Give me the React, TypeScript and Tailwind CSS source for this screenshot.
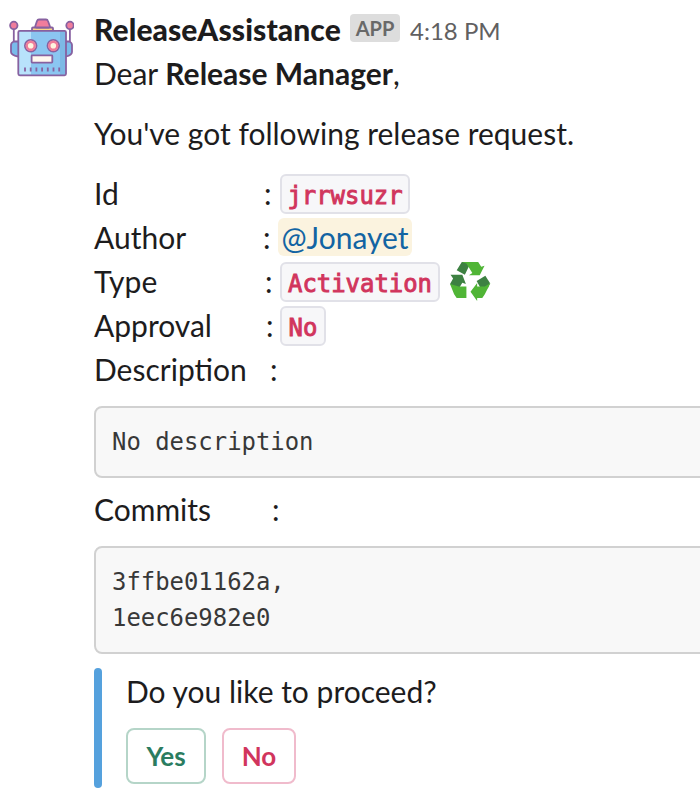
import React from "react";

function Robot() {
  return (
    <svg className="block h-[60px] w-[66px]" viewBox="0 0 66 60" fill="none" stroke="#8761a0" strokeWidth="1.8" strokeLinejoin="round">
      <path d="M5.800 11v14M61.900 11v14" />
      <path d="M10 23.500H6q-3 1-3 3.500v7q0 3 7 4.500M58 23.500h3q3 1 3 3.500v7q0 3-6 4.500" fill="#79bbea" />
      <path d="M25 9.500h19q1 0 1 1v3h-21v-3q0-1 1-1z" fill="#fcd986" />
      <path d="M27.300 8l1.700-5q.5-1.500 2-1.500h7q1.500 0 2 1.500L41.800 8q.5 1.500-1 1.500h-12Q26.800 9.500 27.300 8z" fill="#f07d9c" />
      <rect x="10.300" y="12.800" width="47.700" height="44.500" rx="1.500" fill="#8bc6f1" stroke="none" />
      <path d="M10.500 13.500h12.500v43H10.500z" fill="#b8e2fb" stroke="none" />
      <path d="M52 13h6v44h-6z" fill="#7db9e5" stroke="none" />
      <rect x="10.300" y="12.800" width="47.700" height="44.500" rx="1.500" />
      <circle cx="5.800" cy="7.400" r="3.700" fill="#f07d9c" />
      <circle cx="62" cy="7.400" r="3.700" fill="#f07d9c" />
      <circle cx="22.700" cy="27.700" r="5.800" fill="#fff4df" />
      <circle cx="22.700" cy="27.700" r="4" stroke="#ef7c9a" strokeWidth="2.400" />
      <circle cx="45.300" cy="27.700" r="5.800" fill="#fff4df" />
      <circle cx="45.300" cy="27.700" r="4" stroke="#ef7c9a" strokeWidth="2.400" />
      <rect x="23.600" y="37.400" width="20.700" height="7.200" rx=".5" fill="#fff8f0" />
      <path d="M17 49.500v4M22.700 49.500v4M28.400 49.500v4M34.100 49.500v4M39.800 49.500v4M45.500 49.500v4M51.200 49.500v4" strokeWidth="1.800" />
    </svg>
  );
}

function Recycle() {
  return (
    <svg className="ml-[9px] block h-[41px] w-[43px]" viewBox="0 0 42 40">
      <path d="M7.500 9L12.500 1h9l-2.500 5-3.500 7.500z" fill="#3d8142" />
      <path d="M12.500 1H28.500l3 4.500 3.200-1-4.700 9.300H19.500l3.300-2L17 2.500z" fill="#50b536" />
      <path d="M1.500 13.500h11.500l3.500 9-3.500-1.200L9.500 27l-5-.5L1 22.500l3-5.500z" fill="#3d8142" />
      <path d="M1 22.500l8.500 2.500h7.500v11H7.500L5 32.500z" fill="#50b536" />
      <path d="M27 19.500l8.500-5 4.500 7-2 5H31z" fill="#3d8142" />
      <path d="M40.500 21.500l-5.500 11-2.500 3.500h-5v3L21 30l6.500-8.500V25h7.500z" fill="#50b536" />
    </svg>
  );
}

function Code({ width, children }: { width: string; children: string }) {
  return (
    <code className={`${width} mt-0.5 flex h-10 items-center justify-center rounded-md border-2 border-[#e1e1e8] bg-[#f7f7f9] pt-[3px] font-['DejaVu_Sans_Mono',monospace] text-[23.920px] leading-9 text-[#d1355d] [-webkit-text-stroke:0.900px_#d1355d]`}>
      {children}
    </code>
  );
}

function Field({ label, width, children }: { label: string; width: string; children?: React.ReactNode }) {
  return (
    <div className="flex h-11 items-center">
      <div className="flex w-[186px] shrink-0">
        <span className={`${width} shrink-0`}>{label}</span>
        <span>:</span>
      </div>
      {children}
    </div>
  );
}

export default function App() {
  return (
    <main className="flex h-[806px] w-[700px] overflow-hidden bg-white pt-[7px] font-[Lato,sans-serif] text-[30px] leading-[44px] text-[#1d1c1d]">
      <div className="w-[94px] shrink-0 pl-2 pt-[11px]"><Robot /></div>
      <div className="w-[640px] shrink-0">
        <header className="flex h-11 items-start whitespace-nowrap">
          <span className="w-[247px] font-black tracking-[0.080px]">ReleaseAssistance</span>
          <span className="ml-[9px] mt-[7px] flex h-7 w-[50px] items-center justify-center rounded bg-[#dddddd] text-[20px] font-bold text-[#696969]">APP</span>
          <time className="ml-[10px] mt-0.5 text-[24px] text-[#616061]">4:18 PM</time>
        </header>
        <p>Dear <strong className="font-bold">Release Manager</strong>,</p>
        <p className="mt-4">You've got following release request.</p>
        <section className="mt-4">
          <Field label="Id" width="w-[170px]"><Code width="w-[130px]">jrrwsuzr</Code></Field>
          <Field label="Author" width="w-[169px]">
            <a className="-ml-0.5 flex h-[38px] w-[134px] items-center justify-center rounded-md bg-[#fbf3df] pb-px text-[#1264a3]">@Jonayet</a>
          </Field>
          <Field label="Type" width="w-[171px]"><Code width="w-[160px]">Activation</Code><Recycle /></Field>
          <Field label="Approval" width="w-[172px]"><Code width="w-[46px]">No</Code></Field>
          <Field label="Description" width="w-[176px]" />
        </section>
        <pre className="mt-[15px] h-[72px] rounded-lg border-2 border-[#d1d1d1] bg-[#f8f8f8] px-4 py-4 font-['DejaVu_Sans_Mono',monospace] text-[23.920px] leading-9 text-[#383838]">No description</pre>
        <div className="mt-[9px]"><Field label="Commits" width="w-[178px]" /></div>
        <pre className="mt-[15px] h-[108px] rounded-lg border-2 border-[#d1d1d1] bg-[#f8f8f8] px-4 py-4 font-['DejaVu_Sans_Mono',monospace] text-[23.920px] leading-9 text-[#383838]">{"3ffbe01162a,\n1eec6e982e0"}</pre>
        <section className="mt-[14px] flex h-[120px]">
          <div className="w-2 shrink-0 rounded bg-[#55a1dd]" />
          <div className="pl-6 pt-px">
            <p>Do you like to proceed?</p>
            <div className="mt-[15px] flex gap-4 text-[26px] font-bold">
              <button className="h-14 w-20 rounded-lg border-2 border-[#b5d5c8] text-[#2b7c60]">Yes</button>
              <button className="h-14 w-[74px] rounded-lg border-2 border-[#f0bbcc] text-[#d1355d]">No</button>
            </div>
          </div>
        </section>
      </div>
    </main>
  );
}
